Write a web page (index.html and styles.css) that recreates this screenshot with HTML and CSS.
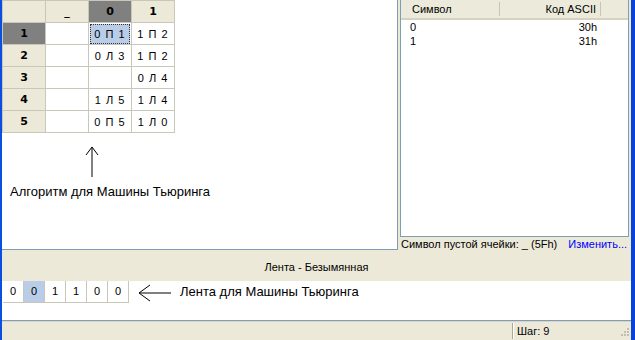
FILE: index.html
```html
<!DOCTYPE html>
<html lang="ru">
<head>
  <meta charset="UTF-8">
  <title>Машина Тьюринга</title>
  <link rel="stylesheet" href="styles.css">
</head>
<body>
  <div class="window">
    <div class="main">
      <!-- Algorithm table -->
      <div class="left-pane">
        <table class="algo">
          <tr>
            <th class="corner"></th>
            <th>_</th>
            <th class="active">0</th>
            <th>1</th>
          </tr>
          <tr>
            <th class="active">1</th>
            <td></td>
            <td><span class="current">0 П 1</span></td>
            <td>1 П 2</td>
          </tr>
          <tr>
            <th>2</th>
            <td></td>
            <td>0 Л 3</td>
            <td>1 П 2</td>
          </tr>
          <tr>
            <th>3</th>
            <td></td>
            <td></td>
            <td>0 Л 4</td>
          </tr>
          <tr>
            <th>4</th>
            <td></td>
            <td>1 Л 5</td>
            <td>1 Л 4</td>
          </tr>
          <tr>
            <th>5</th>
            <td></td>
            <td>0 П 5</td>
            <td>1 Л 0</td>
          </tr>
        </table>

        <div class="note">
          <svg class="arrow-up" width="14" height="32" viewBox="0 0 14 32">
            <path d="M7 1 V31 M7 1 L1 9 M7 1 L13 9" stroke="#000" fill="none" stroke-width="1"/>
          </svg>
          <div class="note-text">Алгоритм для Машины Тьюринга</div>
        </div>
      </div>

      <!-- Alphabet list -->
      <div class="right-pane">
        <div class="list">
          <div class="list-head">
            <div class="col-sym">Символ</div>
            <div class="col-code">Код ASCII</div>
          </div>
          <div class="list-row">
            <div class="col-sym">0</div>
            <div class="col-code">30h</div>
          </div>
          <div class="list-row">
            <div class="col-sym">1</div>
            <div class="col-code">31h</div>
          </div>
        </div>
        <div class="blank-info">
          <span>Символ пустой ячейки: _ (5Fh)</span>
          <a class="change">Изменить...</a>
        </div>
      </div>
    </div>

    <div class="tape-title">Лента - Безымянная</div>

    <div class="tape">
      <div class="cells">
        <div class="cell">0</div>
        <div class="cell selected">0</div>
        <div class="cell">1</div>
        <div class="cell">1</div>
        <div class="cell">0</div>
        <div class="cell">0</div>
      </div>
      <svg class="arrow-left" width="34" height="18" viewBox="0 0 34 18">
        <path d="M1 9 H33 M1 9 L12 1 M1 9 L12 17" stroke="#000" fill="none" stroke-width="1"/>
      </svg>
      <div class="tape-note">Лента для Машины Тьюринга</div>
    </div>

    <div class="status">
      <div class="status-left"></div>
      <div class="status-step">Шаг: 9</div>
      <svg class="grip" width="11" height="11" viewBox="0 0 11 11">
        <g fill="#c2bfae">
          <rect x="8" y="0" width="2" height="2"/>
          <rect x="5" y="3" width="2" height="2"/>
          <rect x="8" y="3" width="2" height="2"/>
          <rect x="2" y="6" width="2" height="2"/>
          <rect x="5" y="6" width="2" height="2"/>
          <rect x="8" y="6" width="2" height="2"/>
        </g>
      </svg>
    </div>
  </div>
</body>
</html>
```

FILE: styles.css
```css
/* Window layout */
body {
  margin: 0;
  font-family: 'Liberation Sans', Arial, sans-serif;
  font-size: 11px;
  color: #000;
  background-color: #ece9d8;
}

.window {
  box-sizing: border-box;
  width: 635px;
  height: 340px;
  display: flex;
  flex-direction: column;
  border-left: 2px solid #0a4fe0;
  border-right: 4px solid #0842d6;
  background-color: #ece9d8;
  overflow: hidden;
}

.main {
  display: flex;
  height: 250px;
  gap: 2px;
}

.left-pane {
  width: 395px;
  height: 249px;
  background-color: #fff;
  border-right: 1px solid #7f9db9;
  border-bottom: 1px solid #7f9db9;
}

/* Algorithm table */
.algo {
  border-collapse: collapse;
  table-layout: fixed;
}

.algo th,
.algo td {
  height: 21px;
  padding: 0;
  text-align: center;
  border: 1px solid #c9c7ba;
}

.algo th {
  width: 42px;
  background-color: #ece9d8;
  font-family: 'DejaVu Sans', sans-serif;
  font-weight: bold;
  font-size: 11px;
}

.algo th.active {
  background-color: #808080;
}

.algo td {
  background-color: #fff;
  letter-spacing: 1px;
  font-size: 11px;
}

.algo .current {
  display: block;
  margin: 0 1px;
  line-height: 20px;
  background-color: #b9cde8;
  outline: 1px dotted #333;
  outline-offset: -1px;
}

.note {
  margin-top: 13px;
}

.arrow-up {
  display: block;
  margin-left: 83px;
}

.note-text {
  margin: 6px 0 0 8px;
  font-size: 13px;
}

/* Alphabet list */
.right-pane {
  width: 231px;
  display: flex;
  flex-direction: column;
}

.list {
  box-sizing: border-box;
  width: 229px;
  height: 237px;
  background-color: #fff;
  border: 1px solid #7f9db9;
  border-top: none;
}

.list-head {
  display: flex;
  height: 20px;
  align-items: center;
  background-color: #ebeadb;
  border-bottom: 2px solid #d6d2c2;
  box-sizing: border-box;
}

.list-head .col-sym {
  width: 99px;
  padding-left: 11px;
  box-sizing: border-box;
  border-right: 1px solid #c7c5b2;
  height: 14px;
  line-height: 14px;
}

.list-head .col-code {
  width: 101px;
  padding-right: 4px;
  box-sizing: border-box;
  text-align: right;
  border-right: 1px solid #c7c5b2;
  height: 14px;
  line-height: 14px;
}

.list-row {
  display: flex;
  height: 14px;
  line-height: 14px;
}

.list-row:first-of-type {
  margin-top: 4px;
}

.list-row .col-sym {
  width: 99px;
  padding-left: 9px;
  box-sizing: border-box;
}

.list-row .col-code {
  width: 97px;
  text-align: right;
}

.blank-info {
  display: flex;
  gap: 11px;
  padding: 1px 0 0 1px;
}

.change {
  color: #0000ff;
  cursor: pointer;
}

/* Tape */
.tape-title {
  height: 31px;
  box-sizing: border-box;
  padding-top: 11px;
  text-align: center;
}

.tape {
  height: 39px;
  display: flex;
  align-items: flex-start;
  background-color: #fff;
  border-bottom: 1px solid #7f9db9;
}

.cells {
  display: flex;
  border-left: 1px solid #fff;
}

.cell {
  width: 20px;
  height: 21px;
  line-height: 21px;
  text-align: center;
  border-right: 1px solid #c9c7ba;
  border-bottom: 1px solid #c9c7ba;
}

.cell.selected {
  background-color: #b9cde8;
}

.arrow-left {
  margin: 3px 0 0 9px;
}

.tape-note {
  margin: 3px 0 0 8px;
  font-size: 13px;
}

/* Status bar */
.status {
  flex: 1;
  display: flex;
  align-items: center;
  border-top: 1px solid #d9d5c4;
}

.status-left {
  width: 510px;
}

.status-step {
  flex: 1;
  height: 16px;
  line-height: 16px;
  padding-left: 4px;
  border-left: 1px solid #aca899;
  box-shadow: inset 1px 0 #fff;
}

.grip {
  align-self: flex-end;
  margin: 0 1px 1px 0;
}
```
